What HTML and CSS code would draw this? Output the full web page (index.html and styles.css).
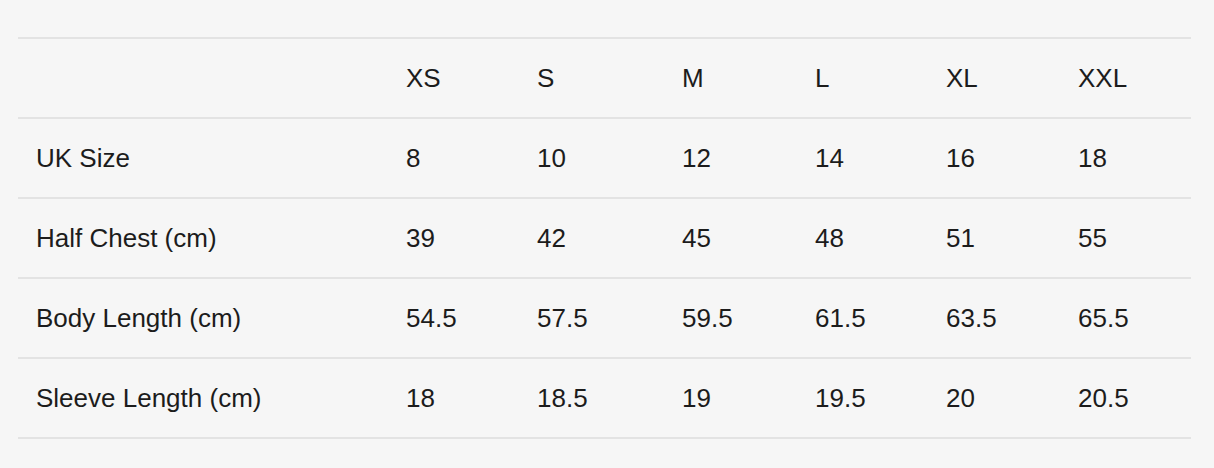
FILE: index.html
```html
<!DOCTYPE html>
<html>
<head>
<meta charset="utf-8">
<link rel="stylesheet" href="styles.css">
</head>
<body>
<div class="wrap">
<table class="sizes">
<colgroup>
<col class="c-label"><col class="c-xs"><col class="c-s"><col class="c-m"><col class="c-l"><col class="c-xl"><col class="c-xxl">
</colgroup>
<thead>
<tr><th></th><th>XS</th><th>S</th><th>M</th><th>L</th><th>XL</th><th>XXL</th></tr>
</thead>
<tbody>
<tr><td>UK Size</td><td>8</td><td>10</td><td>12</td><td>14</td><td>16</td><td>18</td></tr>
<tr><td>Half Chest (cm)</td><td>39</td><td>42</td><td>45</td><td>48</td><td>51</td><td>55</td></tr>
<tr><td>Body Length (cm)</td><td>54.5</td><td>57.5</td><td>59.5</td><td>61.5</td><td>63.5</td><td>65.5</td></tr>
<tr><td>Sleeve Length (cm)</td><td>18</td><td>18.5</td><td>19</td><td>19.5</td><td>20</td><td>20.5</td></tr>
</tbody>
</table>
</div>
</body>
</html>
```
FILE: styles.css
```css
html, body {
  margin: 0;
  padding: 0;
  background: #f6f6f6;
}
.wrap {
  padding: 37px 23px 0 18px;
}
.sizes {
  width: 1173px;
  border-collapse: collapse;
  table-layout: fixed;
  font-family: "Liberation Sans", Arial, sans-serif;
  font-size: 26px;
  color: #1c1c1c;
}
.c-label { width: 370px; }
.c-xs { width: 131px; }
.c-s { width: 145px; }
.c-m { width: 133px; }
.c-l { width: 131px; }
.c-xl { width: 132px; }
.c-xxl { width: 131px; }
.sizes tr {
  border-top: 2px solid #e3e3e3;
}
.sizes tbody tr:last-child {
  border-bottom: 2px solid #e3e3e3;
}
.sizes th,
.sizes td {
  height: 78px;
  padding: 0 0 0 18px;
  text-align: left;
  font-weight: normal;
  vertical-align: middle;
  line-height: 30px;
}
```
